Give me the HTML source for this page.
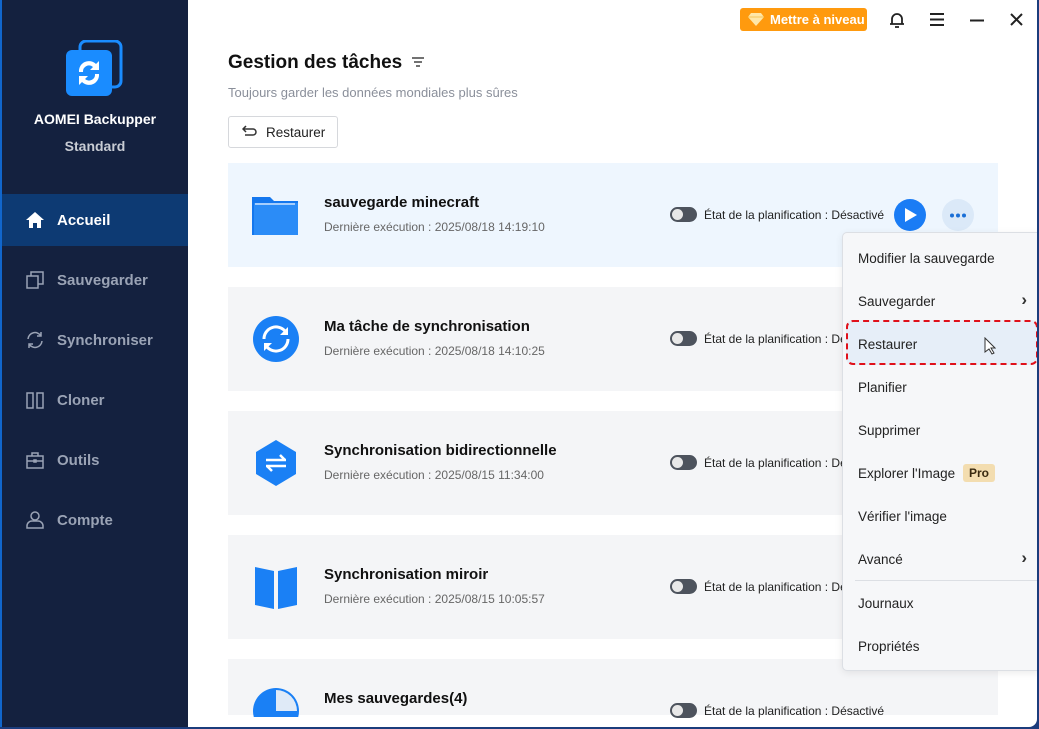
<!DOCTYPE html>
<html><head><meta charset="utf-8"><style>
*{margin:0;padding:0;box-sizing:border-box}
body{width:1039px;height:729px;overflow:hidden;background:#1b3c7c;font-family:"Liberation Sans",sans-serif;position:relative}
.win{position:absolute;left:0;top:0;width:1037px;height:727px;background:#fff;border-radius:0 0 8px 0;overflow:hidden}
.side{position:absolute;left:0;top:0;width:188px;height:729px;background:#14213f;border-left:2px solid #1166cc}
.logo{position:absolute;left:64px;top:40px}
.brand{position:absolute;left:0;width:186px;text-align:center;color:#fff;font-weight:bold;font-size:14px}
.nav{position:absolute;left:0;width:186px;height:52px;display:flex;align-items:center;color:#9aa3b5;font-size:15px;font-weight:bold}
.nav svg{position:absolute;left:23px}
.nav span{position:absolute;left:55px}
.nav.act{background:#0d3a73;color:#fff}
.title{position:absolute;left:228px;top:52px;font-size:19px;font-weight:bold;color:#111}
.sub{position:absolute;left:228px;top:85px;font-size:13px;color:#8a8f9a}
.btn{position:absolute;left:228px;top:116px;width:110px;height:32px;border:1px solid #d6d8dc;border-radius:3px;font-size:13.5px;color:#222;padding:8px 0 0 37px}
.card{position:absolute;left:228px;width:770px;height:104px;background:#f4f5f7}
.card h3{position:absolute;left:96px;top:31px;font-size:15px;color:#111}
.card p{position:absolute;left:96px;top:57px;font-size:12px;color:#666}
.card .st{position:absolute;left:476px;top:45px;font-size:12px;color:#222}
.tg{position:absolute;left:442px;top:44px;width:27px;height:15px;border-radius:8px;background:#4d535d}
.tg:after{content:"";position:absolute;left:2px;top:2px;width:11px;height:11px;border-radius:50%;background:#e8e8e8}
.ic{position:absolute;left:24px;top:29px}
.menu{position:absolute;left:842px;top:232px;width:200px;height:439px;background:#f6f7f9;border:1px solid #dcdfe4;border-radius:5px;box-shadow:0 2px 8px rgba(0,0,0,.08)}
.mi{position:absolute;left:15px;font-size:13.5px;color:#222}
.chev{position:absolute;right:14px;font-size:17px;color:#333;font-weight:bold}
</style></head><body>
<div class="win">
<div class="side">
 <svg class="logo" width="58" height="58" viewBox="0 0 58 58"><rect x="14" y="1" width="41" height="46" rx="6" fill="none" stroke="#1a8cff" stroke-width="3"/><rect x="0" y="10" width="46" height="46" rx="6" fill="#1a8cff"/><path d="M13 32a10 10 0 0 1 17-8l3-3v9h-9l3-3a6 6 0 0 0-10 5z M33 34a10 10 0 0 1-17 8l-3 3v-9h9l-3 3a6 6 0 0 0 10-5z" fill="#fff"/></svg>
 <div class="brand" style="top:111px">AOMEI Backupper</div>
 <div class="brand" style="top:138px;color:#c8ccd4">Standard</div>
 <div class="nav act" style="top:194px"><svg width="20" height="18" viewBox="0 0 20 18"><path d="M10 1L1 9h3v8h4v-5h4v5h4V9h3z" fill="#fff"/></svg><span>Accueil</span></div>
 <div class="nav" style="top:254px"><svg width="20" height="20" viewBox="0 0 20 20" fill="none" stroke="#9aa3b5" stroke-width="1.5"><rect x="2" y="6" width="11" height="12"/><path d="M6 6V2h12v12h-5"/></svg><span>Sauvegarder</span></div>
 <div class="nav" style="top:314px"><svg width="20" height="20" viewBox="0 0 20 20" fill="none" stroke="#9aa3b5" stroke-width="1.5"><path d="M3 9a7 7 0 0 1 13-3M17 11a7 7 0 0 1-13 3M16 2v4h-4M4 18v-4h4"/></svg><span>Synchroniser</span></div>
 <div class="nav" style="top:374px"><svg width="20" height="20" viewBox="0 0 20 20" fill="none" stroke="#9aa3b5" stroke-width="1.5"><path d="M2 3h6v15H2zM12 3h6v15h-6z"/></svg><span>Cloner</span></div>
 <div class="nav" style="top:434px"><svg width="20" height="20" viewBox="0 0 20 20" fill="none" stroke="#9aa3b5" stroke-width="1.5"><rect x="2" y="6" width="16" height="12"/><path d="M7 6V3h6v3M2 11h16"/><rect x="9" y="10" width="2" height="2" fill="#9aa3b5"/></svg><span>Outils</span></div>
 <div class="nav" style="top:494px"><svg width="20" height="20" viewBox="0 0 20 20" fill="none" stroke="#9aa3b5" stroke-width="1.5"><circle cx="10" cy="6" r="4"/><path d="M2 18v-2a5 5 0 0 1 5-5h6a5 5 0 0 1 5 5v2z"/></svg><span>Compte</span></div>
</div>

<div style="position:absolute;left:740px;top:8px;width:127px;height:23px;background:#ff9a0e;border-radius:3px;color:#fff;font-weight:bold;font-size:13px;padding:4px 0 0 30px">Mettre à niveau</div>
<svg style="position:absolute;left:748px;top:12px" width="16" height="14" viewBox="0 0 16 14"><path d="M3 1h10l3 4-8 9-8-9z" fill="#ffe7a8"/><path d="M0 5h16" stroke="#f5c45a"/></svg>
<svg style="position:absolute;left:889px;top:11px" width="16" height="18" viewBox="0 0 16 18" fill="none" stroke="#222" stroke-width="1.8"><path d="M3 13V8a5 5 0 0 1 10 0v5h2H1zM6 16h4"/></svg>
<svg style="position:absolute;left:930px;top:13px" width="14" height="13" stroke="#222" stroke-width="2"><path d="M0 1h14M0 6.5h14M0 12h14"/></svg>
<svg style="position:absolute;left:970px;top:19px" width="14" height="3" stroke="#222" stroke-width="2"><path d="M0 1.5h14"/></svg>
<svg style="position:absolute;left:1010px;top:13px" width="13" height="13" stroke="#222" stroke-width="2"><path d="M1 1l11 11M12 1L1 12"/></svg>

<div class="title">Gestion des tâches</div>
<svg style="position:absolute;left:412px;top:57px" width="12" height="10" stroke="#444" stroke-width="1.5"><path d="M0 1h12M2 5h8M4 9h4"/></svg>
<div class="sub">Toujours garder les données mondiales plus sûres</div>
<div class="btn">Restaurer</div>
<svg style="position:absolute;left:242px;top:124px" width="16" height="14" fill="none" stroke="#333" stroke-width="1.5"><path d="M4 2L1 5l3 3M1 5h10a3 3 0 0 1 0 6H3"/></svg>

<div class="card" style="top:163px;background:#eef6fe">
 <svg class="ic" width="48" height="40" viewBox="0 0 48 40" style="top:32px"><path d="M0 2h18l4 4h24v34H0z" fill="#1477ee"/><rect x="2" y="8" width="44" height="32" fill="#2b8cf7"/><path d="M3 9h40" stroke="#cfe3ff" stroke-width="1.5"/></svg>
 <h3>sauvegarde minecraft</h3><p>Dernière exécution : 2025/08/18 14:19:10</p>
 <div class="tg"></div><div class="st">État de la planification : Désactivé</div>
 <div style="position:absolute;left:666px;top:36px;width:32px;height:32px;border-radius:50%;background:#1a7cf5"></div>
 <svg style="position:absolute;left:677px;top:45px" width="12" height="14"><path d="M0 0l12 7-12 7z" fill="#fff"/></svg>
 <div style="position:absolute;left:714px;top:36px;width:32px;height:32px;border-radius:50%;background:#dbe9f8"></div>
 <svg style="position:absolute;left:721px;top:50px" width="18" height="5"><circle cx="3" cy="2.5" r="2" fill="#1a6fd6"/><circle cx="9" cy="2.5" r="2" fill="#1a6fd6"/><circle cx="15" cy="2.5" r="2" fill="#1a6fd6"/></svg>
</div>
<div class="card" style="top:287px">
 <svg class="ic" width="48" height="48" viewBox="0 0 48 48" style="top:28px"><circle cx="24" cy="24" r="23" fill="#1a80f5"/><path d="M12 24a12 12 0 0 1 21-8M36 24a12 12 0 0 1-21 8" fill="none" stroke="#fff" stroke-width="3"/><path d="M36 12v8h-8zM12 36v-8h8z" fill="#fff"/></svg>
 <h3>Ma tâche de synchronisation</h3><p>Dernière exécution : 2025/08/18 14:10:25</p>
 <div class="tg"></div><div class="st">État de la planification : Dé</div>
</div>
<div class="card" style="top:411px">
 <svg class="ic" width="48" height="48" viewBox="0 0 48 48" style="top:28px"><path d="M24 1l20 12v22L24 47 4 35V13z" fill="#1a80f5"/><path d="M14 21h20M28 16l5 5M34 27H14M20 32l-5-5" stroke="#fff" stroke-width="2.5" fill="none"/></svg>
 <h3>Synchronisation bidirectionnelle</h3><p>Dernière exécution : 2025/08/15 11:34:00</p>
 <div class="tg"></div><div class="st">État de la planification : Dé</div>
</div>
<div class="card" style="top:535px">
 <svg class="ic" width="48" height="48" viewBox="0 0 48 48" style="top:30px"><path d="M3 2l19 4v38L3 40zM26 6l19-4v38l-19 4z" fill="#1a80f5"/></svg>
 <h3>Synchronisation miroir</h3><p>Dernière exécution : 2025/08/15 10:05:57</p>
 <div class="tg"></div><div class="st">État de la planification : Dé</div>
</div>
<div class="card" style="top:659px;height:56px">
 <svg class="ic" width="48" height="30" viewBox="0 0 48 30" style="top:28px"><circle cx="24" cy="24" r="23" fill="#1a80f5"/><path d="M24 24V3a21 21 0 0 1 21 21z" fill="#dfeaf7"/></svg>
 <h3>Mes sauvegardes(4)</h3>
 <div class="tg"></div><div class="st">État de la planification : Désactivé</div>
</div>

<div class="menu">
 <div class="mi" style="top:18px">Modifier la sauvegarde</div>
 <div class="mi" style="top:61px">Sauvegarder</div><div class="chev" style="top:57px">›</div>
 <div style="position:absolute;left:3px;top:87px;width:192px;height:45px;background:#e6eef8;border:2.5px dashed #e0101a;border-radius:7px"></div>
 <div class="mi" style="top:104px">Restaurer</div>
 <svg style="position:absolute;left:141px;top:104px" width="12" height="18" viewBox="0 0 12 18"><path d="M1 1v14l4-3 3 5 2-1-3-5h4z" fill="#fff" stroke="#333"/></svg>
 <div class="mi" style="top:147px">Planifier</div>
 <div class="mi" style="top:190px">Supprimer</div>
 <div class="mi" style="top:233px">Explorer l'Image</div>
 <div style="position:absolute;left:120px;top:231px;width:32px;height:18px;background:#f3ddb0;border-radius:3px;font-size:12px;font-weight:bold;color:#3a2a10;text-align:center;line-height:18px">Pro</div>
 <div class="mi" style="top:276px">Vérifier l'image</div>
 <div class="mi" style="top:319px">Avancé</div><div class="chev" style="top:315px">›</div>
 <div style="position:absolute;left:12px;top:347px;width:186px;height:1px;background:#dcdfe4"></div>
 <div class="mi" style="top:363px">Journaux</div>
 <div class="mi" style="top:406px">Propriétés</div>
</div>
</div>
</body></html>
